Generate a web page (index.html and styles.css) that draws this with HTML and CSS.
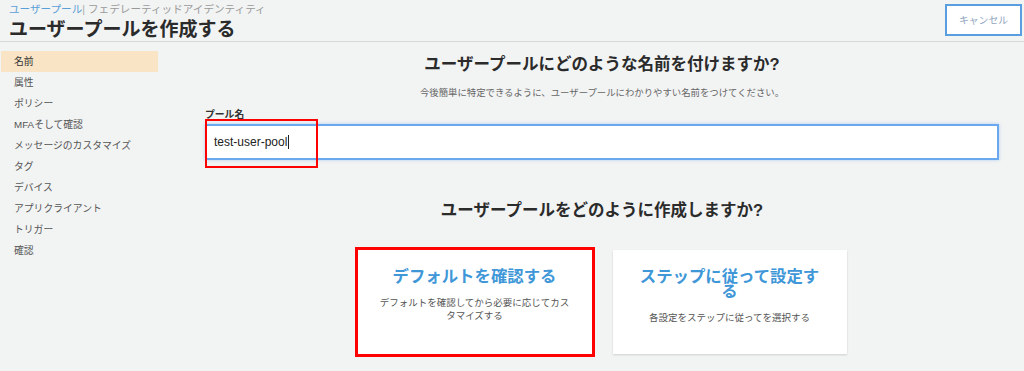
FILE: index.html
```html
<!DOCTYPE html>
<html lang="ja">
<head>
<meta charset="utf-8">
<link rel="stylesheet" href="styles.css">
</head>
<body>
<header class="header">
  <div class="header-text">
    <div class="crumbs"><span class="crumb-link">ユーザープール</span><span class="crumb-sep">|</span> <span class="crumb-other">フェデレーティッドアイデンティティ</span></div>
    <h1 class="title">ユーザープールを作成する</h1>
  </div>
  <button class="cancel">キャンセル</button>
</header>
<div class="layout">
  <nav class="sidebar">
    <div class="nav-item active">名前</div>
    <div class="nav-item">属性</div>
    <div class="nav-item">ポリシー</div>
    <div class="nav-item">MFAそして確認</div>
    <div class="nav-item">メッセージのカスタマイズ</div>
    <div class="nav-item">タグ</div>
    <div class="nav-item">デバイス</div>
    <div class="nav-item">アプリクライアント</div>
    <div class="nav-item">トリガー</div>
    <div class="nav-item">確認</div>
  </nav>
  <main class="main">
    <h2 class="heading">ユーザープールにどのような名前を付けますか?</h2>
    <p class="sub">今後簡単に特定できるように、ユーザープールにわかりやすい名前をつけてください。</p>
    <div class="field">
      <div class="label">プール名</div>
      <div class="input"><span class="value">test-user-pool</span><span class="caret"></span></div>
      <div class="highlight-input"></div>
    </div>
    <h2 class="heading heading-2">ユーザープールをどのように作成しますか?</h2>
    <div class="cards">
      <div class="card card-marked">
        <div class="card-title">デフォルトを確認する</div>
        <div class="card-desc">デフォルトを確認してから必要に応じてカスタマイズする</div>
      </div>
      <div class="card">
        <div class="card-title">ステップに従って設定する</div>
        <div class="card-desc">各設定をステップに従ってを選択する</div>
      </div>
    </div>
  </main>
</div>
</body>
</html>
```

FILE: styles.css
```css
* { box-sizing: border-box; }
html, body {
  margin: 0;
  padding: 0;
  background: #f2f3f3;
  font-family: "Liberation Sans", "Noto Sans CJK JP", sans-serif;
  color: #333;
  height: 371px;
  overflow: hidden;
}
.header {
  display: flex;
  justify-content: space-between;
  align-items: flex-start;
  height: 42px;
  border-bottom: 1px solid #d5d8d8;
  padding: 0 2px 0 9px;
}
.header-text { padding-top: 2px; }
.crumbs {
  font-size: 10.6px;
  line-height: 14px;
  color: #999;
}
.crumb-link { color: #5b9fd8; }
.crumb-sep { color: #aaa; }
.title {
  margin: 2px 0 0;
  font-size: 19px;
  line-height: 24px;
  font-weight: bold;
  color: #2b2b2b;
}
.cancel {
  margin-top: 4px;
  width: 77px;
  height: 32px;
  background: #fff;
  border: 2px solid #5a9ee0;
  color: #8ea3bd;
  font-family: inherit;
  font-size: 9.8px;
  padding: 0;
}
.layout {
  display: flex;
}
.sidebar {
  width: 160px;
  padding: 9px 0 0 1px;
  flex: none;
}
.nav-item {
  width: 157px;
  height: 21px;
  line-height: 21px;
  padding-left: 13px;
  font-size: 9.8px;
  color: #555;
}
.nav-item.active {
  background: #f9e4c5;
  color: #333;
}
.main {
  flex: 1;
  padding: 12px 25px 0 45px;
}
.heading {
  margin: 0;
  text-align: center;
  font-size: 16.5px;
  line-height: 20px;
  font-weight: bold;
  color: #2b2b2b;
}
.sub {
  margin: 12px 0 0;
  text-align: center;
  font-size: 9.4px;
  line-height: 14px;
  color: #666;
}
.field {
  position: relative;
  margin-top: 8px;
}
.label {
  font-size: 9.8px;
  font-weight: bold;
  line-height: 14px;
  color: #333;
}
.input {
  margin-top: 2px;
  height: 36px;
  background: #fff;
  border: 2px solid #6aa8f0;
  box-shadow: 0 0 3px rgba(90, 160, 240, 0.45);
  display: flex;
  align-items: center;
  padding-left: 7px;
  font-size: 12px;
  color: #222;
}
.caret {
  display: inline-block;
  width: 1px;
  height: 14px;
  background: #222;
  margin-left: 1px;
}
.highlight-input {
  position: absolute;
  left: 0;
  top: 11px;
  width: 113px;
  height: 49px;
  border: 2px solid #f00;
}
.heading-2 {
  margin-top: 40px;
}
.cards {
  display: flex;
  justify-content: center;
  gap: 21px;
  margin-top: 30px;
}
.card {
  width: 234px;
  height: 104px;
  background: #fff;
  box-shadow: 0 1px 2px rgba(0, 0, 0, 0.15);
  padding: 19px 20px 0;
  text-align: center;
}
.card-marked {
  outline: 3px solid #f00;
  outline-offset: 0;
  box-shadow: none;
}
.card-title {
  font-size: 16.4px;
  line-height: 15px;
  font-weight: bold;
  color: #4097d8;
}
.card-desc {
  margin-top: 12px;
  font-size: 9.5px;
  line-height: 13px;
  color: #555;
}
```
